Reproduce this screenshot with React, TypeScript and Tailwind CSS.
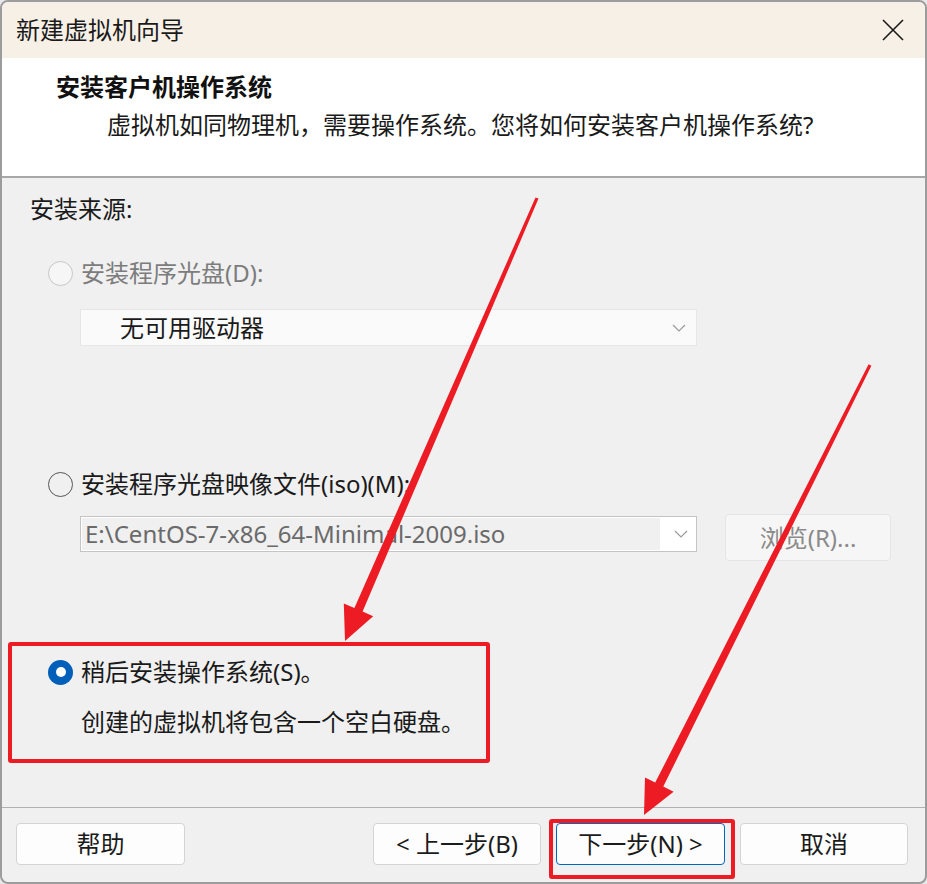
import React from "react";

const font = { fontFamily: '"Noto Sans", "Noto Sans CJK SC", sans-serif' };

type Pt = [number, number];

function arrowPoints(tail: Pt, tip: Pt, headLen: number, headHalf: number, tailHalf: number, neckHalf: number) {
  const dx = tip[0] - tail[0];
  const dy = tip[1] - tail[1];
  const len = Math.hypot(dx, dy);
  const ux = dx / len;
  const uy = dy / len;
  const nx = -uy;
  const ny = ux;
  const bx = tip[0] - ux * headLen;
  const by = tip[1] - uy * headLen;
  const pts: Pt[] = [
    [tail[0] + nx * tailHalf, tail[1] + ny * tailHalf],
    [bx + nx * neckHalf, by + ny * neckHalf],
    [bx + nx * headHalf, by + ny * headHalf],
    tip,
    [bx - nx * headHalf, by - ny * headHalf],
    [bx - nx * neckHalf, by - ny * neckHalf],
    [tail[0] - nx * tailHalf, tail[1] - ny * tailHalf],
  ];
  return pts.map((p) => `${p[0].toFixed(1)},${p[1].toFixed(1)}`).join(" ");
}

function Radio({ state }: { state: "disabled" | "off" | "on" }) {
  if (state === "on") {
    return (
      <span className="flex h-[25px] w-[25px] shrink-0 items-center justify-center rounded-full bg-[#005fb8]">
        <span className="h-[10px] w-[10px] rounded-full bg-white" />
      </span>
    );
  }
  return (
    <span
      className={
        state === "disabled"
          ? "h-[25px] w-[25px] shrink-0 rounded-full border-[1.5px] border-[#c6c6c6] bg-[#f6f6f6]"
          : "h-[25px] w-[25px] shrink-0 rounded-full border-[1.5px] border-[#555555] bg-[#f0f0f0]"
      }
    />
  );
}

function Chevron() {
  return (
    <svg width="14" height="8" viewBox="0 0 14 8" className="shrink-0">
      <polyline points="1,1 7,7 13,1" fill="none" stroke="#9b9b9b" strokeWidth="1.2" />
    </svg>
  );
}

function FooterButton({ label, primary, width }: { label: string; primary?: boolean; width: string }) {
  return (
    <button
      className={
        (primary ? "border border-[#0067c0] " : "border border-[#d4d4d4] ") +
        width +
        " flex h-[42px] items-center justify-center rounded-[4px] bg-[#fdfdfd] text-[24px] text-[#1b1b1b]"
      }
    >
      {label}
    </button>
  );
}

export default function App() {
  const arrow1 = arrowPoints([537, 198], [345, 641], 34, 16, 1.6, 4.5);
  const arrow2 = arrowPoints([870, 365], [644, 815], 34, 16, 1.6, 4.5);

  return (
    <div className="relative h-[884px] w-[927px] bg-[#e8e8e8]" style={font}>
      <div className="flex h-[884px] w-[927px] flex-col overflow-hidden rounded-[8px] border-2 border-[#9c9c9c] bg-[#f0f0f0]">
        {/* title bar */}
        <div className="flex h-[56px] shrink-0 items-center justify-between bg-[#f7f0e7] pl-[14px] pr-[20px]">
          <span className="text-[24px] leading-none text-[#1a1a1a]">新建虚拟机向导</span>
          <svg width="24" height="24" viewBox="0 0 24 24">
            <path d="M2 2 L22 22 M22 2 L2 22" stroke="#1a1a1a" strokeWidth="1.6" fill="none" />
          </svg>
        </div>

        {/* header */}
        <div className="flex h-[118px] shrink-0 flex-col bg-white">
          <div className="mt-[13px] pl-[54px] text-[24px] font-bold leading-[32px] text-[#111]">
            安装客户机操作系统
          </div>
          <div className="mt-[6px] pl-[105px] text-[24px] leading-[32px] text-[#1a1a1a]">
            虚拟机如同物理机，需要操作系统。您将如何安装客户机操作系统?
          </div>
        </div>
        <div className="h-[2px] shrink-0 bg-[#a8a8a8]" />

        {/* body */}
        <div className="flex flex-1 flex-col">
          <div className="mt-[15px] pl-[28px] text-[24px] leading-[32px] text-[#1a1a1a]">安装来源:</div>

          <div className="mt-[32px] flex h-[32px] items-center gap-[8px] pl-[46px]">
            <Radio state="disabled" />
            <span className="text-[24px] text-[#7c7c7c]">安装程序光盘(D):</span>
          </div>

          <div className="ml-[78px] mt-[20px] flex h-[37px] w-[617px] items-center justify-between border border-[#e6e6e6] bg-[#fafafa] pl-[39px] pr-[10px]">
            <span className="text-[24px] text-[#1a1a1a]">无可用驱动器</span>
            <Chevron />
          </div>

          <div className="mt-[122px] flex h-[32px] items-center gap-[8px] pl-[46px]">
            <Radio state="off" />
            <span className="text-[24px] text-[#1a1a1a]">安装程序光盘映像文件(iso)(M):</span>
          </div>

          <div className="ml-[78px] mt-[14px] flex items-start gap-[28px]">
            <div className="mt-[2px] flex h-[36px] w-[617px] items-center border border-[#c4c4c4] bg-white p-[1px]">
              <div className="flex h-full w-[578px] items-center bg-[#f0f0f0] pl-[3px]">
                <span className="text-[24px] text-[#6a6a6a]">E:\CentOS-7-x86_64-Minimal-2009.iso</span>
              </div>
              <div className="flex flex-1 items-center justify-center pl-[6px]">
                <Chevron />
              </div>
            </div>
            <div className="flex h-[47px] w-[166px] items-center justify-center rounded-[4px] border border-[#e4e4e4] bg-[#f6f6f6] text-[24px] text-[#8a8a8a]">
              浏览(R)...
            </div>
          </div>

          <div className="mt-[95px] flex h-[32px] items-center gap-[8px] pl-[46px]">
            <Radio state="on" />
            <span className="text-[24px] text-[#1a1a1a]">稍后安装操作系统(S)。</span>
          </div>
          <div className="mt-[18px] pl-[79px] text-[24px] leading-[32px] text-[#1a1a1a]">
            创建的虚拟机将包含一个空白硬盘。
          </div>
        </div>

        {/* footer */}
        <div className="h-[1px] shrink-0 bg-[#b0b0b0]" />
        <div className="flex h-[74px] shrink-0 items-start pl-[14px] pr-[17px] pt-[15px]">
          <FooterButton label="帮助" width="w-[169px]" />
          <div className="flex-1" />
          <div className="flex gap-[15px]">
            <FooterButton label="< 上一步(B)" width="w-[168px]" />
            <FooterButton label="下一步(N) >" width="w-[169px]" primary />
            <FooterButton label="取消" width="w-[168px]" />
          </div>
        </div>
      </div>

      {/* annotations */}
      <div className="absolute left-[8px] top-[642px] h-[121px] w-[482px] rounded-[3px] border-[4px] border-[#ed1c24]" />
      <div className="absolute left-[549px] top-[819px] h-[60px] w-[186px] rounded-[3px] border-[4px] border-[#ed1c24]" />
      <svg className="pointer-events-none absolute left-0 top-0" width="927" height="884" viewBox="0 0 927 884">
        <polygon points={arrow1} fill="#ed1c24" />
        <polygon points={arrow2} fill="#ed1c24" />
      </svg>
    </div>
  );
}
